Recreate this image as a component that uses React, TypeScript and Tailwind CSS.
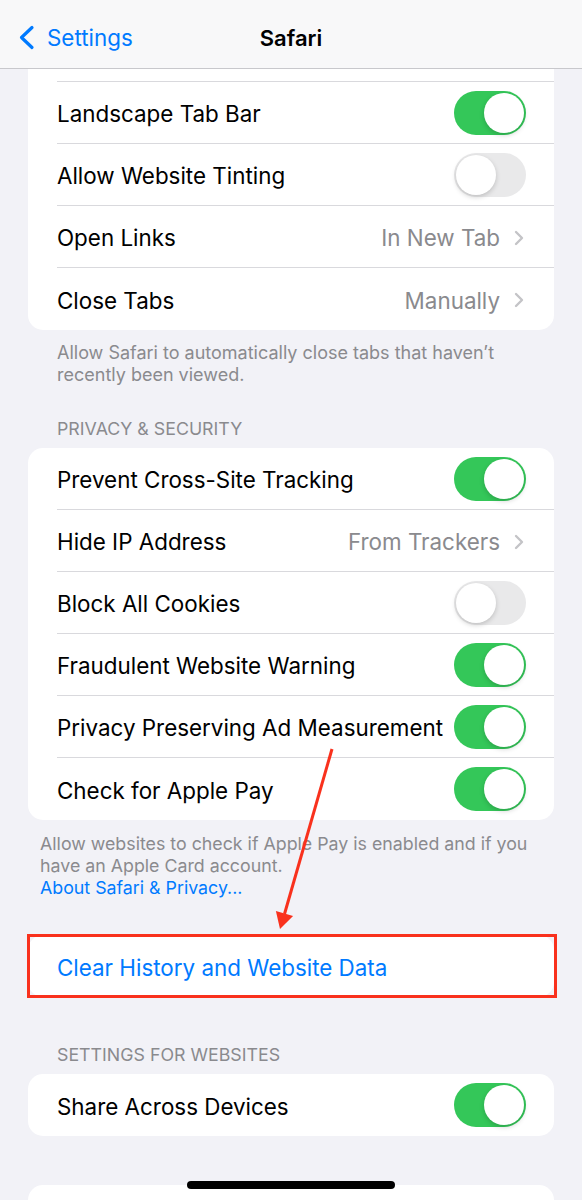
import React from 'react';

type RowProps = {
  label: string;
  value?: string;
  toggle?: boolean;
  on?: boolean;
  last?: boolean;
  blue?: boolean;
};

const Toggle = ({ on }: { on: boolean }) => (
  <div
    className={
      on
        ? 'flex h-[44px] w-[72px] shrink-0 justify-end rounded-full bg-[#34c759] p-[2px]'
        : 'flex h-[44px] w-[72px] shrink-0 justify-start rounded-full bg-[#e9e9ea] p-[2px]'
    }
  >
    <div className="h-[40px] w-[40px] rounded-full bg-white shadow-[0_2px_5px_rgba(0,0,0,0.18)]" />
  </div>
);

const Chevron = () => (
  <svg width="10" height="16" viewBox="0 0 10 16" className="ml-[14px] shrink-0">
    <path d="M2 2 L8 8 L2 14" fill="none" stroke="#c4c4c7" strokeWidth="2.4" strokeLinecap="round" strokeLinejoin="round" />
  </svg>
);

const Row = ({ label, value, toggle, on, last, blue }: RowProps) => (
  <div className="flex h-[62px] pl-[29px]">
    <div
      className={
        'flex flex-1 items-center justify-between pr-[28px] ' +
        (last ? '' : 'border-b border-[#d9d9dd]')
      }
    >
      <span className={blue ? 'pt-[3px] text-[22.4px] text-[#007aff]' : 'pt-[3px] text-[22.4px] text-black'}>{label}</span>
      {toggle && <Toggle on={!!on} />}
      {value && (
        <div className="flex items-center pr-[2px] pt-[3px]">
          <span className="text-[22.4px] text-[#8a8a8e]">{value}</span>
          <Chevron />
        </div>
      )}
    </div>
  </div>
);

const SectionHeader = ({ children }: { children: React.ReactNode }) => (
  <div className="ml-[57px] text-[17.8px] leading-[20px] text-[#8a8a8e]">{children}</div>
);

export default function App() {
  return (
    <div className="relative h-[1200px] w-[582px] overflow-hidden bg-[#f2f2f7] [font-family:Inter,Liberation_Sans,sans-serif]">
      {/* nav bar */}
      <div className="grid h-[69px] grid-cols-[1fr_auto_1fr] items-center border-b border-[#c8c8cc] bg-[#f8f8f9] pt-[8px]">
        <div className="flex items-center pl-[18px]">
          <svg width="17" height="25" viewBox="0 0 17 25">
            <path d="M14 2.5 L3.5 12.5 L14 22.5" fill="none" stroke="#007aff" strokeWidth="3.2" strokeLinecap="round" strokeLinejoin="round" />
          </svg>
          <span className="ml-[12px] text-[22.4px] text-[#007aff]">Settings</span>
        </div>
        <div className="text-[22px] font-semibold text-black">Safari</div>
        <div />
      </div>

      {/* tabs card */}
      <div className="mx-[28px] rounded-b-[15px] bg-white">
        <div className="flex h-[13px] pl-[29px]">
          <div className="flex-1 border-b border-[#d9d9dd]" />
        </div>
        <Row label="Landscape Tab Bar" toggle on />
        <Row label="Allow Website Tinting" toggle on={false} />
        <Row label="Open Links" value="In New Tab" />
        <Row label="Close Tabs" value="Manually" last />
      </div>
      <div className="ml-[57px] mt-[12px] text-[18px] leading-[22px] text-[#8a8a8e]">
        Allow Safari to automatically close tabs that haven’t
        <br />
        recently been viewed.
      </div>

      <div className="mt-[33px]">
        <SectionHeader>PRIVACY &amp; SECURITY</SectionHeader>
      </div>
      <div className="mx-[28px] mt-[9px] rounded-[15px] bg-white">
        <Row label="Prevent Cross-Site Tracking" toggle on />
        <Row label="Hide IP Address" value="From Trackers" />
        <Row label="Block All Cookies" toggle on={false} />
        <Row label="Fraudulent Website Warning" toggle on />
        <Row label="Privacy Preserving Ad Measurement" toggle on />
        <Row label="Check for Apple Pay" toggle on last />
      </div>
      <div className="ml-[40px] mt-[13px] text-[17.8px] leading-[22px] text-[#8a8a8e]">
        Allow websites to check if Apple Pay is enabled and if you
        <br />
        have an Apple Card account.
        <br />
        <span className="text-[#007aff]">About Safari &amp; Privacy...</span>
      </div>

      {/* clear history, highlighted */}
      <div className="relative mx-[28px] mt-[36px] rounded-[15px] bg-white">
        <Row label="Clear History and Website Data" blue last />
        <div className="absolute -left-[1px] -right-[3px] -top-[1px] -bottom-[1px] border-[3px] border-[#f9311d]" />
      </div>

      <div className="mt-[48px]">
        <SectionHeader>SETTINGS FOR WEBSITES</SectionHeader>
      </div>
      <div className="mx-[28px] mt-[9px] rounded-[15px] bg-white">
        <Row label="Share Across Devices" toggle on last />
      </div>

      <div className="mx-[28px] mt-[49px] h-[80px] rounded-t-[15px] bg-white" />

      {/* annotation arrow */}
      <svg className="pointer-events-none absolute left-0 top-0" width="582" height="1200" viewBox="0 0 582 1200">
        <line x1="332" y1="749" x2="284.5" y2="914" stroke="#f9311d" strokeWidth="3" />
        <polygon points="280,929 293.1,916.1 275.9,911.1" fill="#f9311d" />
      </svg>

      {/* home indicator */}
      <div className="absolute left-[187px] top-[1181px] h-[8px] w-[208px] rounded-full bg-black" />
    </div>
  );
}
